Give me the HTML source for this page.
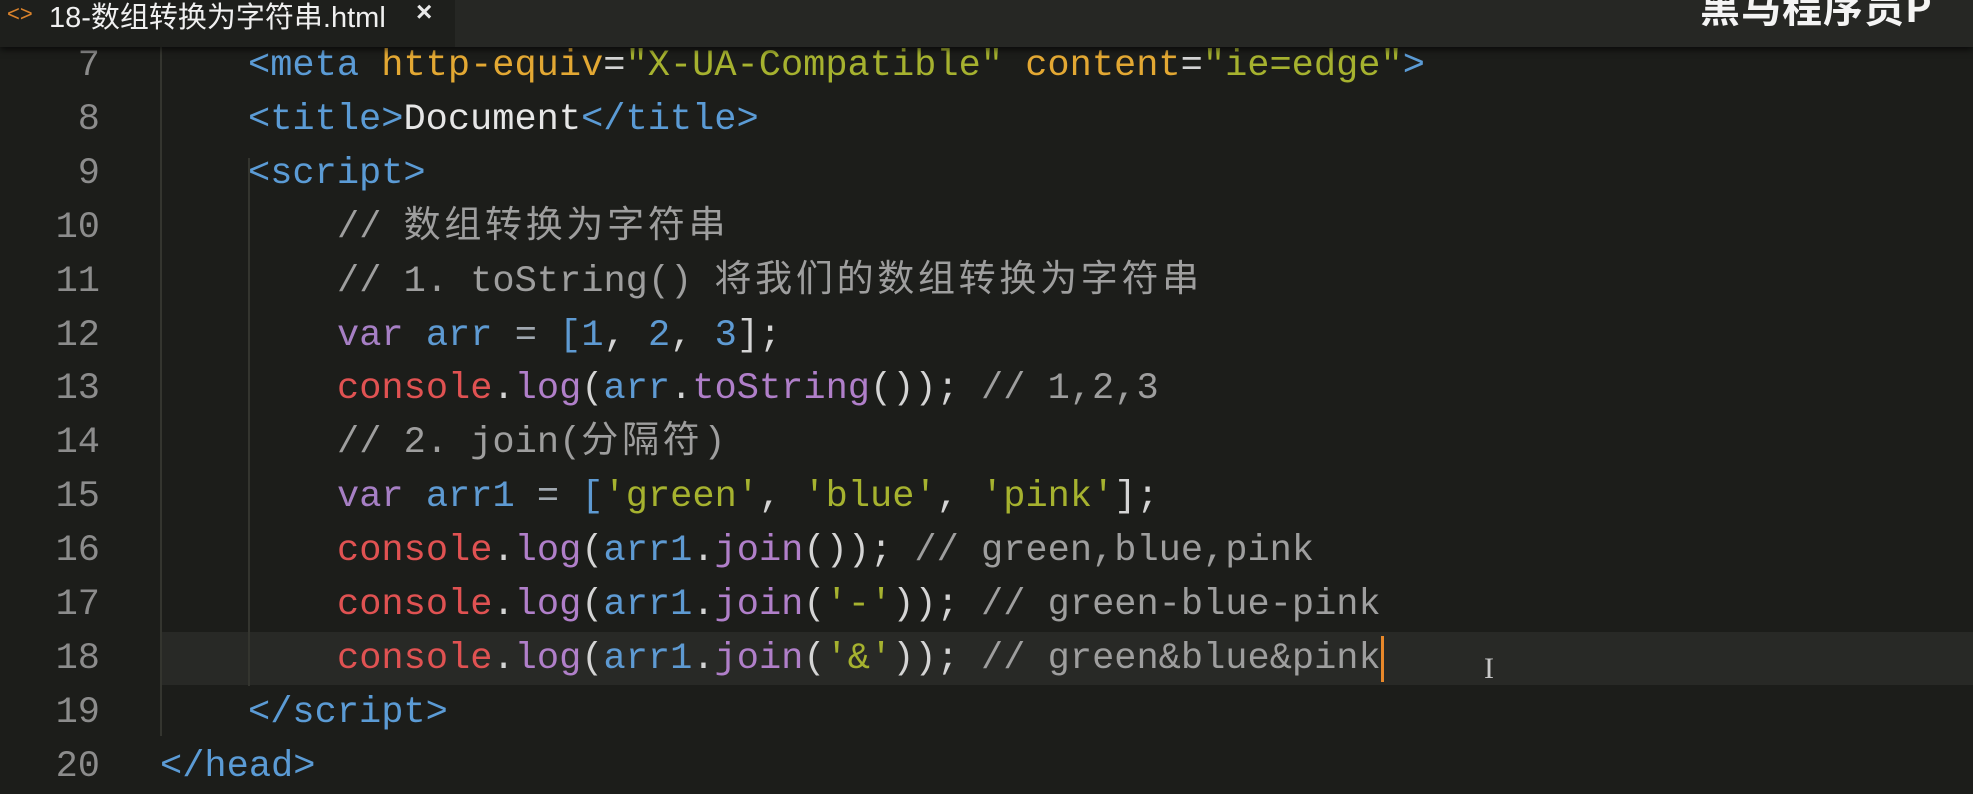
<!DOCTYPE html>
<html><head><meta charset="utf-8"><style>
html,body{margin:0;padding:0;}
body{width:1973px;height:754px;overflow:hidden;background:#1c1d1a;position:relative;font-family:"Liberation Mono","Noto Sans CJK SC",monospace;}
.bar{position:absolute;left:0;top:0;width:1973px;height:47px;background:#262724;box-shadow:0 3px 6px rgba(0,0,0,.6);z-index:5;overflow:hidden;}
.tab{position:absolute;left:0;top:0;width:455px;height:47px;background:#1e1f1c;}
.tab .ic{position:absolute;left:7px;top:1px;color:#d9822b;font:22px "Liberation Sans",sans-serif;}
.tab .t{position:absolute;left:49px;top:-6px;color:#f0f0f0;font:29px "Liberation Sans","Noto Sans CJK SC",sans-serif;letter-spacing:0px;white-space:nowrap;}
.tab .x{position:absolute;left:416px;top:-4px;color:#e8e8e8;font:bold 28px "Liberation Sans",sans-serif;}
.wm{position:absolute;left:1700px;top:-24px;color:#f4f4f4;font:bold 40px "Noto Sans CJK SC",sans-serif;white-space:nowrap;letter-spacing:1px;}
.ln{position:absolute;left:0;width:100px;text-align:right;color:#8c8c8c;font-size:37px;height:54px;line-height:54px;}
.cl{position:absolute;font-size:37px;height:54px;line-height:54px;white-space:pre;color:#d4d4d4;}
.g{position:absolute;width:2px;background:#34352f;}
.hl{position:absolute;left:160px;top:632px;width:1813px;height:53px;background:#282926;}
.cur{position:absolute;left:1381px;top:636px;width:3px;height:46px;background:#e8882a;}
.c{color:#9e9e9e}.cj{letter-spacing:3.7px}
.tg{color:#5b9bd5}.at{color:#e3a833}.s{color:#a6b22f}.tx{color:#e6e6e6}
.v{color:#a67fc4}.id{color:#5e9ad2}.co{color:#e05252}.f{color:#b07fc9}.n{color:#5e9ad2}.op{color:#a0a8b0}
</style></head><body>
<div class="bar"><div class="tab"><span class="ic">&lt;&gt;</span><span class="t">18-数组转换为字符串.html</span><span class="x">×</span></div><div class="wm">黑马程序员P</div></div>
<div class="hl"></div>
<div class="g" style="left:160px;top:47px;height:689px"></div>
<div class="g" style="left:248px;top:158px;height:528px"></div>

<div class="ln" style="top:39px">7</div>
<div class="cl" style="left:248px;top:39px"><span class="tg">&lt;meta</span> <span class="at">http-equiv</span>=<span class="s">"X-UA-Compatible"</span> <span class="at">content</span>=<span class="s">"ie=edge"</span><span class="tg">&gt;</span></div>
<div class="ln" style="top:92.9px">8</div>
<div class="cl" style="left:248px;top:92.9px"><span class="tg">&lt;title&gt;</span><span class="tx">Document</span><span class="tg">&lt;/title&gt;</span></div>
<div class="ln" style="top:146.8px">9</div>
<div class="cl" style="left:248px;top:146.8px"><span class="tg">&lt;script&gt;</span></div>
<div class="ln" style="top:200.7px">10</div>
<div class="cl c" style="left:337px;top:200.7px">// <span class="cj">数组转换为字符串</span></div>
<div class="ln" style="top:254.6px">11</div>
<div class="cl c" style="left:337px;top:254.6px">// 1. toString() <span class="cj">将我们的数组转换为字符串</span></div>
<div class="ln" style="top:308.5px">12</div>
<div class="cl" style="left:337px;top:308.5px"><span class="v">var</span> <span class="id">arr</span> <span class="op">=</span> <span class="id">[</span><span class="n">1</span>, <span class="n">2</span>, <span class="n">3</span>];</div>
<div class="ln" style="top:362.4px">13</div>
<div class="cl" style="left:337px;top:362.4px"><span class="co">console</span>.<span class="f">log</span>(<span class="id">arr</span>.<span class="f">toString</span>()); <span class="c">// 1,2,3</span></div>
<div class="ln" style="top:416.3px">14</div>
<div class="cl c" style="left:337px;top:416.3px">// 2. join(<span class="cj">分隔符</span>)</div>
<div class="ln" style="top:470.2px">15</div>
<div class="cl" style="left:337px;top:470.2px"><span class="v">var</span> <span class="id">arr1</span> <span class="op">=</span> <span class="id">[</span><span class="s">'green'</span>, <span class="s">'blue'</span>, <span class="s">'pink'</span>];</div>
<div class="ln" style="top:524.1px">16</div>
<div class="cl" style="left:337px;top:524.1px"><span class="co">console</span>.<span class="f">log</span>(<span class="id">arr1</span>.<span class="f">join</span>()); <span class="c">// green,blue,pink</span></div>
<div class="ln" style="top:578px">17</div>
<div class="cl" style="left:337px;top:578px"><span class="co">console</span>.<span class="f">log</span>(<span class="id">arr1</span>.<span class="f">join</span>(<span class="s">'-'</span>)); <span class="c">// green-blue-pink</span></div>
<div class="ln" style="top:631.9px">18</div>
<div class="cl" style="left:337px;top:631.9px"><span class="co">console</span>.<span class="f">log</span>(<span class="id">arr1</span>.<span class="f">join</span>(<span class="s">'&amp;'</span>)); <span class="c">// green&amp;blue&amp;pink</span></div>
<div class="cur"></div>
<div style="position:absolute;left:1484px;top:652px;color:#c8c8c8;font:30px 'Liberation Serif',serif;">I</div>
<div class="ln" style="top:685.8px">19</div>
<div class="cl" style="left:248px;top:685.8px"><span class="tg">&lt;/script&gt;</span></div>
<div class="ln" style="top:739.7px">20</div>
<div class="cl" style="left:160px;top:739.7px"><span class="tg">&lt;/head&gt;</span></div>
</body></html>
